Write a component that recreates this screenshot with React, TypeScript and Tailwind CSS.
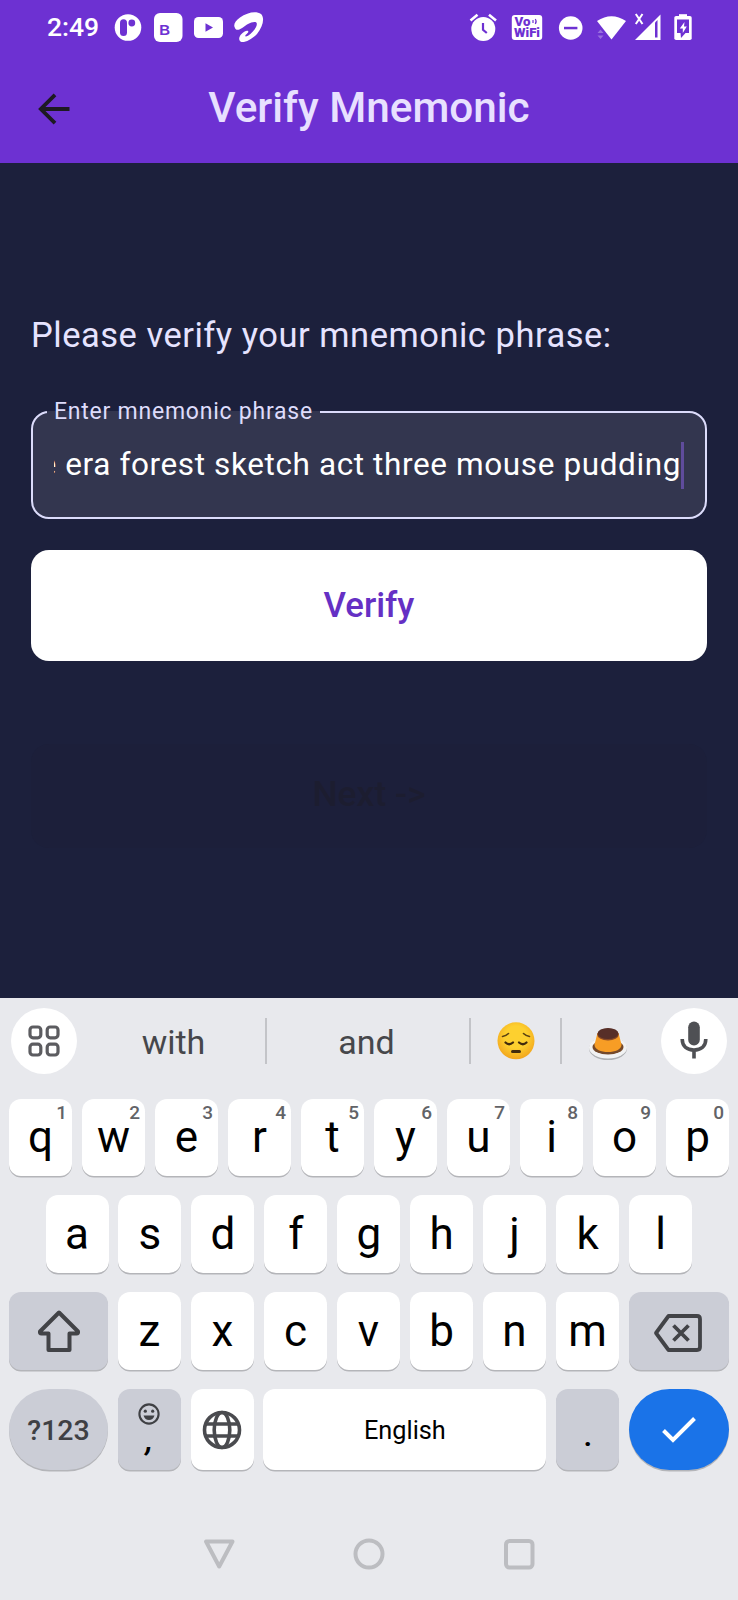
import type { ReactNode } from "react";

const FONT = "font-['Roboto','Noto_Sans',sans-serif]";

function StatusBar() {
  return (
    <div className="flex h-[54px] shrink-0 items-center pr-[45px] pl-[47px] text-white">
      <span className="w-[66px] text-[26.5px] leading-none font-medium">2:49</span>
      <svg className="h-8 w-[30px]" viewBox="113 11 30 32">
        <circle cx="128" cy="27.5" r="13.3" fill="#fff" />
        <rect x="120" y="19.3" width="7" height="16.7" rx="3.5" fill="#6d31d2" />
        <circle cx="131.8" cy="23" r="3.4" fill="#6d31d2" />
      </svg>
      <svg className="ml-[10px] h-8 w-[30px]" viewBox="153 11 30 32">
        <rect x="154" y="13" width="28.5" height="29" rx="6" fill="#fff" />
        <text x="159.2" y="35" fontSize="15" fontWeight="700" fill="#6d31d2" fontFamily="Liberation Sans, sans-serif">B</text>
      </svg>
      <svg className="ml-[10px] h-8 w-8" viewBox="193 11 32 32">
        <rect x="194" y="17" width="29" height="21" rx="4.5" fill="#fff" />
        <path d="M205.5 23.3 L213 27.5 L205.5 31.7Z" fill="#6d31d2" />
      </svg>
      <svg className="ml-2 h-8 w-8" viewBox="233 11 32 32">
        <path
          fill="#fff"
          d="M235 28C233 25 235 21 240 17.5C247 12.5 256 10.5 261 14C265 17.5 263 27 257 34C252 39 246 42.5 241.5 42C238.5 41 238.5 37.5 241 34.5C243.5 31.5 247 30 248 31C249 32 247.5 33 245.8 34.8C244.5 36.5 245.5 37 248 35.8C252.5 33 257.3 27 256.8 23.5C256.3 20.8 251.5 22 248 24C244.5 26 240.5 29.8 237.5 29.8C236 29.8 235.4 29 235 28Z"
        />
      </svg>

      <svg className="ml-auto h-8 w-[30px]" viewBox="468 11 30 32">
        <circle cx="483.3" cy="29" r="12" fill="#fff" />
        <path d="M470.5 20.5L477.5 14.8M496 20.5L489 14.8" stroke="#fff" strokeWidth="2.6" />
        <path d="M483 23V29.8L486.8 33" stroke="#6d31d2" strokeWidth="2.2" fill="none" />
      </svg>
      <svg className="ml-[13px] h-8 w-8" viewBox="511 11 32 32">
        <rect x="511.8" y="15" width="30.4" height="25" rx="3" fill="#fff" />
        <g fill="#6d31d2" fontFamily="Roboto, sans-serif" fontWeight="900" fontSize="12">
          <text x="514.5" y="26.3" textLength="16" lengthAdjust="spacingAndGlyphs">Vo</text>
          <text x="514" y="37.3" textLength="26" lengthAdjust="spacingAndGlyphs">WiFi</text>
        </g>
        <path d="M533 20V23M535.3 19Q537 21.5 535.3 24" stroke="#6d31d2" strokeWidth="1.2" fill="none" />
      </svg>
      <svg className="ml-[15px] h-8 w-[26px]" viewBox="558 11 26 32">
        <circle cx="570.7" cy="28" r="11.8" fill="#fff" />
        <rect x="564" y="26.8" width="13.4" height="2.5" fill="#6d31d2" />
      </svg>
      <svg className="ml-[11px] h-8 w-[34px]" viewBox="595 11 34 32">
        <path d="M597 21Q611.5 11.5 626 21L611.5 39.5Z" fill="#fff" />
        <path d="M597.5 33L600.5 29.5L603.5 33ZM597.5 35.5L600.5 39L603.5 35.5Z" fill="#fff" opacity="0.3" />
      </svg>
      <svg className="ml-[5px] h-8 w-7" viewBox="634 11 28 32">
        <path d="M635 40L660.5 14.5V40Z" fill="#fff" />
        <path d="M655 22.5L657.5 20V37.5H655Z" fill="#6d31d2" />
        <path d="M635.8 14L642.5 24M642.5 14L635.8 24" stroke="#fff" strokeWidth="2" />
      </svg>
      <svg className="ml-[11px] h-8 w-5" viewBox="673 11 20 32">
        <rect x="674.3" y="16" width="17.4" height="24" rx="1.8" fill="#fff" />
        <rect x="679" y="14.2" width="8" height="3" fill="#fff" />
        <rect x="677" y="19.5" width="12" height="13.5" fill="#6d31d2" />
        <path d="M680.5 33H685.5L681 38Z" fill="#6d31d2" />
        <path d="M684.5 22L679.8 28.5H682.8V33L686.8 26.5H684Z" fill="#fff" />
      </svg>
    </div>
  );
}

function TitleBar() {
  return (
    <div className="flex h-[109px] shrink-0 items-center justify-between px-[38px] text-[#e8e0ff]">
      <svg className="mt-[1px] h-8 w-8" viewBox="0 0 32 32" fill="none" stroke="#1d1a22" strokeWidth="3.8">
        <path d="M31.5 16H3.5M17 1.8L2.8 16L17 30.2" />
      </svg>
      <h1 className="pb-[1px] text-[42.3px] leading-none font-medium whitespace-nowrap">Verify Mnemonic</h1>
      <span className="w-8" />
    </div>
  );
}

function MnemonicForm() {
  return (
    <main className="flex h-[835px] shrink-0 flex-col px-[31px] pt-[148px]">
      <p className="text-[34.5px] leading-[48px] tracking-[0.51px] whitespace-nowrap text-[#e6e3ff]">
        Please verify your mnemonic phrase:
      </p>
      <fieldset className="mt-[39px] h-[121px] min-w-0 rounded-[18px] border-2 border-[#dcdcfb] bg-[#33364f] pr-[21px] pl-[21px]">
        <legend className="-ml-[7px] h-7 px-[7px] text-[23px] leading-7 tracking-[0.76px] whitespace-nowrap text-[#dedcfb]">
          Enter mnemonic phrase
        </legend>
        <div className="mt-[15px] flex h-[48px] items-center">
          <div className="flex min-w-0 flex-1 justify-end overflow-hidden">
            <span className="text-[31.5px] leading-[46px] tracking-[0.61px] whitespace-pre text-white">
              e era forest sketch act three mouse pudding
            </span>
          </div>
          <span className="h-[47px] w-[3px] shrink-0 bg-[#5f4c9c]" />
        </div>
      </fieldset>
      <button className="mt-[31px] h-[111px] shrink-0 rounded-[18px] bg-white text-[34.8px] font-medium text-[#6530c4]">
        Verify
      </button>
      <button className="mt-[83px] h-[104px] shrink-0 rounded-[18px] bg-[#1c1f3a] pb-[3px] text-[35.5px] font-medium text-[#1c1d30]">
        Next -&gt;
      </button>
    </main>
  );
}

function Divider() {
  return <span className="h-[46px] w-[2px] shrink-0 bg-[#c3c4c8]" />;
}

function Suggestions() {
  return (
    <div className="flex h-[86px] shrink-0 items-center pr-[11px] pl-[11px] text-[34px] text-[#46474b]">
      <span className="flex h-[66px] w-[66px] items-center justify-center rounded-full bg-white">
        <svg className="h-8 w-8" viewBox="0 0 32 32" fill="none" stroke="#5c5c60" strokeWidth="3.2">
          <rect x="2" y="2" width="10.8" height="10.8" rx="3" />
          <rect x="19.2" y="2" width="10.8" height="10.8" rx="3" />
          <rect x="2" y="19.2" width="10.8" height="10.8" rx="3" />
          <rect x="19.2" y="19.2" width="10.8" height="10.8" rx="3" />
        </svg>
      </span>
      <span className="w-[188px] pt-[2px] pl-[5px] text-center">with</span>
      <Divider />
      <span className="w-[202px] pt-[2px] pr-[3px] text-center">and</span>
      <Divider />
      <span className="flex w-[89px] justify-center">
        <svg className="h-[38px] w-[38px]" viewBox="0 0 38 38" fill="none" strokeLinecap="round">
          <defs>
            <radialGradient id="face" cx="50%" cy="40%" r="60%">
              <stop offset="0.5" stopColor="#fdd02f" />
              <stop offset="1" stopColor="#f2a51d" />
            </radialGradient>
          </defs>
          <circle cx="19" cy="18.8" r="18.5" fill="url(#face)" />
          <path d="M5.5 14.5Q9 14 11.5 11.5M32.5 14.5Q29 14 26.5 11.5" stroke="#5b4212" strokeWidth="1.6" />
          <path d="M8.500 20.500Q12 24 16 20.500M22 20.500Q26 24 29.500 20.500" stroke="#422b0d" strokeWidth="2.2" />
          <path d="M15.500 29.500H22.500" stroke="#422b0d" strokeWidth="3" />
        </svg>
      </span>
      <Divider />
      <span className="flex w-[91px] justify-center pt-[5px]">
        <svg className="h-[34px] w-[40px]" viewBox="0 0 40 34">
          <ellipse cx="20" cy="21.5" rx="19" ry="11.500" fill="#aeb0b3" />
          <ellipse cx="20" cy="20.500" rx="19" ry="11" fill="#f1f2f3" />
          <ellipse cx="20" cy="20" rx="15.500" ry="7.500" fill="#74492b" />
          <path d="M9.500 6L6.500 17.500C6 27.500 34 27.500 33.500 17.500L30.500 6Z" fill="#f79d25" />
          <ellipse cx="20" cy="7.500" rx="10.800" ry="6" fill="#8a4a25" />
          <ellipse cx="20" cy="6.500" rx="10.300" ry="5.500" fill="#572f28" />
        </svg>
      </span>
      <span className="ml-auto flex h-[66px] w-[66px] items-center justify-center rounded-full bg-white">
        <svg className="mr-[1px] mb-[2px] h-[38px] w-7" viewBox="0 0 28 38" fill="none" stroke="#4f5054" strokeWidth="3.6">
          <rect x="8.2" y="0.5" width="11.6" height="24" rx="5.8" fill="#4f5054" stroke="none" />
          <path d="M2.200 18C2.200 25.500 7.400 29 14 29S25.800 25.500 25.800 18M14 29V37.500" />
        </svg>
      </span>
    </div>
  );
}

type KeyProps = { label: ReactNode; hint?: string; size?: string; tone?: string; shape?: string };

function Key({ label, hint, size = "w-[63px]", tone = "bg-white", shape = "rounded-[12px]" }: KeyProps) {
  return (
    <div
      className={`relative flex h-full shrink-0 items-center justify-center text-[44px] leading-none text-black shadow-[0_1.5px_0_#b4b5b9] ${size} ${tone} ${shape}`}
    >
      {label}
      {hint && <span className="absolute top-[4px] right-[5px] text-[19px] font-medium text-[#626367]">{hint}</span>}
    </div>
  );
}

function Keyboard() {
  return (
    <section className="flex h-[602px] shrink-0 flex-col bg-[#e8e9ed]">
      <Suggestions />
      <div className="mt-[15px] flex h-[77px] shrink-0 justify-between px-[9px]">
        {"qwertyuiop".split("").map((c, i) => (
          <Key key={c} label={<span className="pb-[2px]">{c}</span>} hint={String((i + 1) % 10)} />
        ))}
      </div>
      <div className="mt-[19px] flex h-[78px] shrink-0 justify-between pr-[46px] pl-[45.5px]">
        {"asdfghjkl".split("").map((c) => (
          <Key key={c} label={c} />
        ))}
      </div>
      <div className="mt-[19px] flex h-[78px] shrink-0 justify-between px-[9px]">
        <Key
          size="w-[99px]"
          tone="bg-[#cbcdd6]"
          label={
            <svg className="h-[44px] w-[44px]" viewBox="0 0 44 44" fill="none" stroke="#424347" strokeWidth="4" strokeLinejoin="round">
              <path d="M22 3.500L3 22.500Q2.500 24.500 4.500 24.500H11.500V41H32.500V24.500H39.500Q41.500 24.500 41 22.500Z" />
            </svg>
          }
        />
        {"zxcvbnm".split("").map((c) => (
          <Key key={c} label={c} />
        ))}
        <Key
          size="w-[100px]"
          tone="bg-[#cbcdd6]"
          label={
            <svg className="mt-[3px] mr-[2px] h-[40px] w-[50px]" viewBox="0 0 50 40" fill="none" stroke="#424347" strokeWidth="3.8" strokeLinejoin="round">
              <path d="M15.500 3H44Q47 3 47 6V34Q47 37 44 37H15.500L3 20Z" />
              <path d="M20.500 12.500L35.500 27.500M35.500 12.500L20.500 27.500" />
            </svg>
          }
        />
      </div>
      <div className="mt-[19px] flex h-[81px] shrink-0 justify-between px-[9px]">
        <Key
          size="w-[99px]"
          tone="bg-[#cbcdd6]"
          shape="rounded-full"
          label={<span className="pt-[3px] text-[28.5px] font-medium text-[#3f4044]">?123</span>}
        />
        <Key
          tone="bg-[#cbcdd6]"
          label={
            <span className="flex h-full flex-col items-center pt-[14px]">
              <svg className="h-[22px] w-[22px]" viewBox="0 0 22 22" fill="none" stroke="#3f4044" strokeWidth="2.1">
                <circle cx="11" cy="11" r="9.6" />
                <circle cx="7.3" cy="8.2" r="1.6" fill="#3f4044" stroke="none" />
                <circle cx="14.7" cy="8.2" r="1.6" fill="#3f4044" stroke="none" />
                <path d="M5.5 12.5H16.5Q15 17 11 17T5.5 12.5Z" fill="#3f4044" stroke="none" />
              </svg>
              <span className="mt-[1px] text-[30px] leading-[30px] font-bold italic">,</span>
            </span>
          }
        />
        <Key
          label={
            <svg className="h-10 w-10" viewBox="0 0 40 40" fill="none" stroke="#4a4b4f" strokeWidth="3.6">
              <circle cx="20" cy="20" r="17.5" />
              <ellipse cx="20" cy="20" rx="7.8" ry="17.5" />
              <path d="M3.5 14H36.500M3.500 26H36.500" />
            </svg>
          }
        />
        <Key size="w-[283px]" label={<span className="pt-[3px] text-[25.3px]">English</span>} />
        <Key tone="bg-[#cbcdd6]" label={<span className="pt-[15px] text-[28px] font-bold">.</span>} />
        <Key
          size="w-[100px]"
          tone="bg-[#1a73e8]"
          shape="rounded-full"
          label={
            <svg className="h-[28px] w-9" viewBox="0 0 36 28" fill="none" stroke="#fff" strokeWidth="4">
              <path d="M2.500 14.500L12 24L33.500 2.500" />
            </svg>
          }
        />
      </div>
      <div className="mt-[68px] flex h-8 shrink-0 justify-center gap-[118px]">
        <svg className="h-8 w-8" viewBox="0 0 32 32" fill="none" stroke="#bcbdc1" strokeWidth="4" strokeLinejoin="round">
          <path d="M3 3.500H29.500L16.200 28.500Z" />
        </svg>
        <svg className="h-8 w-8" viewBox="0 0 32 32" fill="none" stroke="#bcbdc1" strokeWidth="4">
          <circle cx="16" cy="16" r="13.500" />
        </svg>
        <svg className="h-8 w-8" viewBox="0 0 32 32" fill="none" stroke="#bcbdc1" strokeWidth="4">
          <rect x="3" y="3" width="26.500" height="26.500" rx="3.500" />
        </svg>
      </div>
    </section>
  );
}

export default function App() {
  return (
    <div className={`flex h-[1600px] w-[738px] flex-col overflow-hidden bg-[#1c203c] ${FONT}`}>
      <header className="flex h-[163px] shrink-0 flex-col bg-[#6d31d2]">
        <StatusBar />
        <TitleBar />
      </header>
      <MnemonicForm />
      <Keyboard />
    </div>
  );
}
